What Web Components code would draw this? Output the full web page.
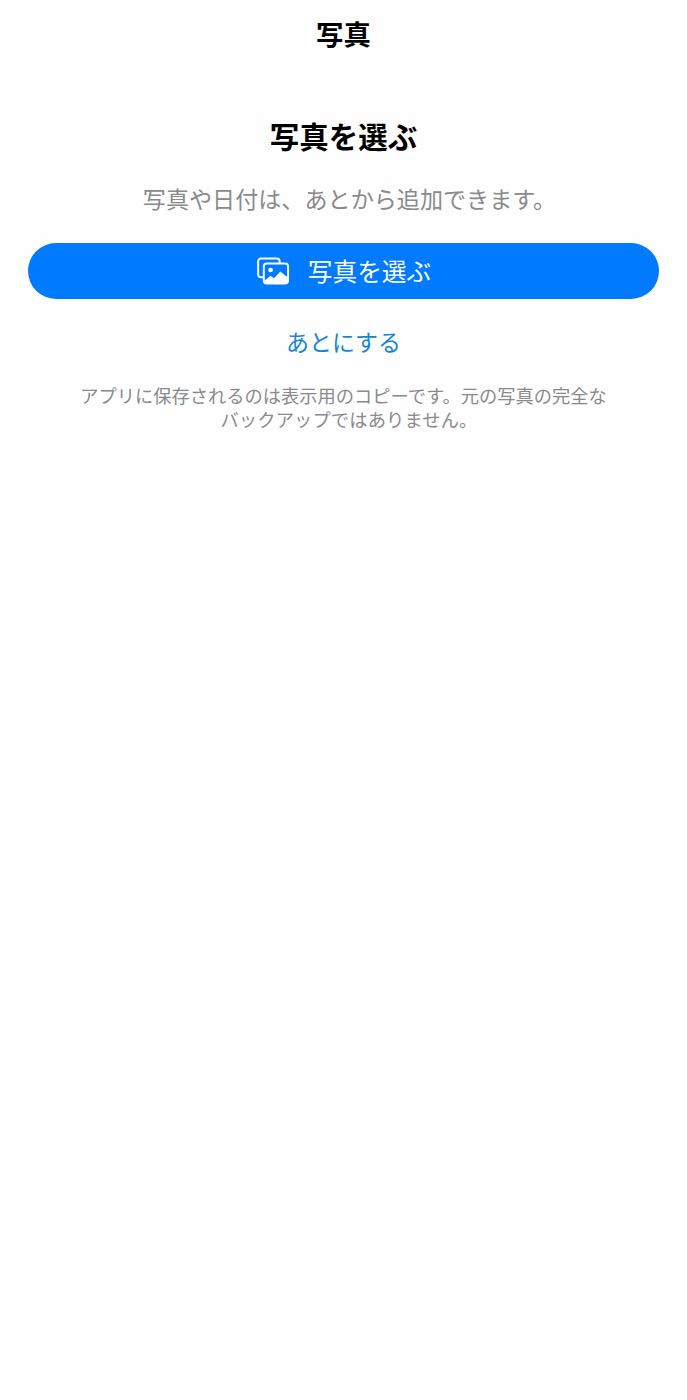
<!DOCTYPE html>
<html lang="ja"><head><meta charset="utf-8"><style>html,body{margin:0;background:#fefefe}</style></head><body>
<photo-screen></photo-screen>
<script>
const F='"Noto Sans CJK JP","Inter",sans-serif';
class NavTitle extends HTMLElement{constructor(){super();this.attachShadow({mode:'open'}).innerHTML=`<style>:host{display:block;height:68px;text-align:center;font:700 27.4px/66px ${F};color:#000}</style><slot></slot>`}}
class PrimaryButton extends HTMLElement{constructor(){super();this.attachShadow({mode:'open'}).innerHTML=`<style>:host{display:flex;align-items:center;justify-content:center;gap:18px;height:56px;border-radius:28px;background:#007aff;color:#fff;font:400 24.7px/1 ${F}}svg{width:33px;height:28px;display:block;margin-left:1px}span{display:block;padding-bottom:2px}</style><svg viewBox="0 0 34 28" fill="none"><path d="M6.5 20.5H4A2.8 2.8 0 0 1 1.2 17.7V4A2.8 2.8 0 0 1 4 1.2H20.5A2.8 2.8 0 0 1 23.3 4V5.8" stroke="#fff" stroke-width="2"/><rect x="7" y="6.2" width="25" height="20.6" rx="3" stroke="#fff" stroke-width="2"/><circle cx="14" cy="13" r="2.4" fill="#fff"/><path d="M7.5 24L14 19L17.5 21.5L24 14.5L32 21V24.5A2.8 2.8 0 0 1 29.2 27H10.2A2.8 2.8 0 0 1 7.5 24.5Z" fill="#fff"/></svg><span><slot></slot></span>`}}
class LinkButton extends HTMLElement{constructor(){super();this.attachShadow({mode:'open'}).innerHTML=`<style>:host{display:block;text-align:center;color:#1585d8;font:400 23px/30px ${F}}</style><slot></slot>`}}
class PhotoScreen extends HTMLElement{constructor(){super();this.attachShadow({mode:'open'}).innerHTML=`<style>:host{display:block;height:1400px;background:#fefefe;font-family:${F}}
.c{padding:0 28px;display:flex;flex-direction:column}
h1{margin:0;padding-top:45px;text-align:center;font:700 29.5px/44px ${F};color:#000}
.s{margin:0;padding-top:24px;padding-left:12px;text-align:center;font:400 23.1px/34px ${F};color:#8a8a8e;white-space:nowrap}
primary-button{margin-top:28px}
link-button{margin-top:27px}
.n{margin:0;padding-top:27px;text-align:center;font:400 18.25px/24px ${F};color:#8a8a8e}
.n span{padding-left:11px;letter-spacing:.15px}</style>
<nav-title>写真</nav-title><div class="c"><h1>写真を選ぶ</h1><p class="s">写真や日付は、あとから追加できます。</p><primary-button>写真を選ぶ</primary-button><link-button>あとにする</link-button><p class="n">アプリに保存されるのは表示用のコピーです。元の写真の完全な<br><span>バックアップではありません。</span></p></div>`}}
customElements.define('nav-title',NavTitle);customElements.define('primary-button',PrimaryButton);customElements.define('link-button',LinkButton);customElements.define('photo-screen',PhotoScreen);
</script></body></html>
